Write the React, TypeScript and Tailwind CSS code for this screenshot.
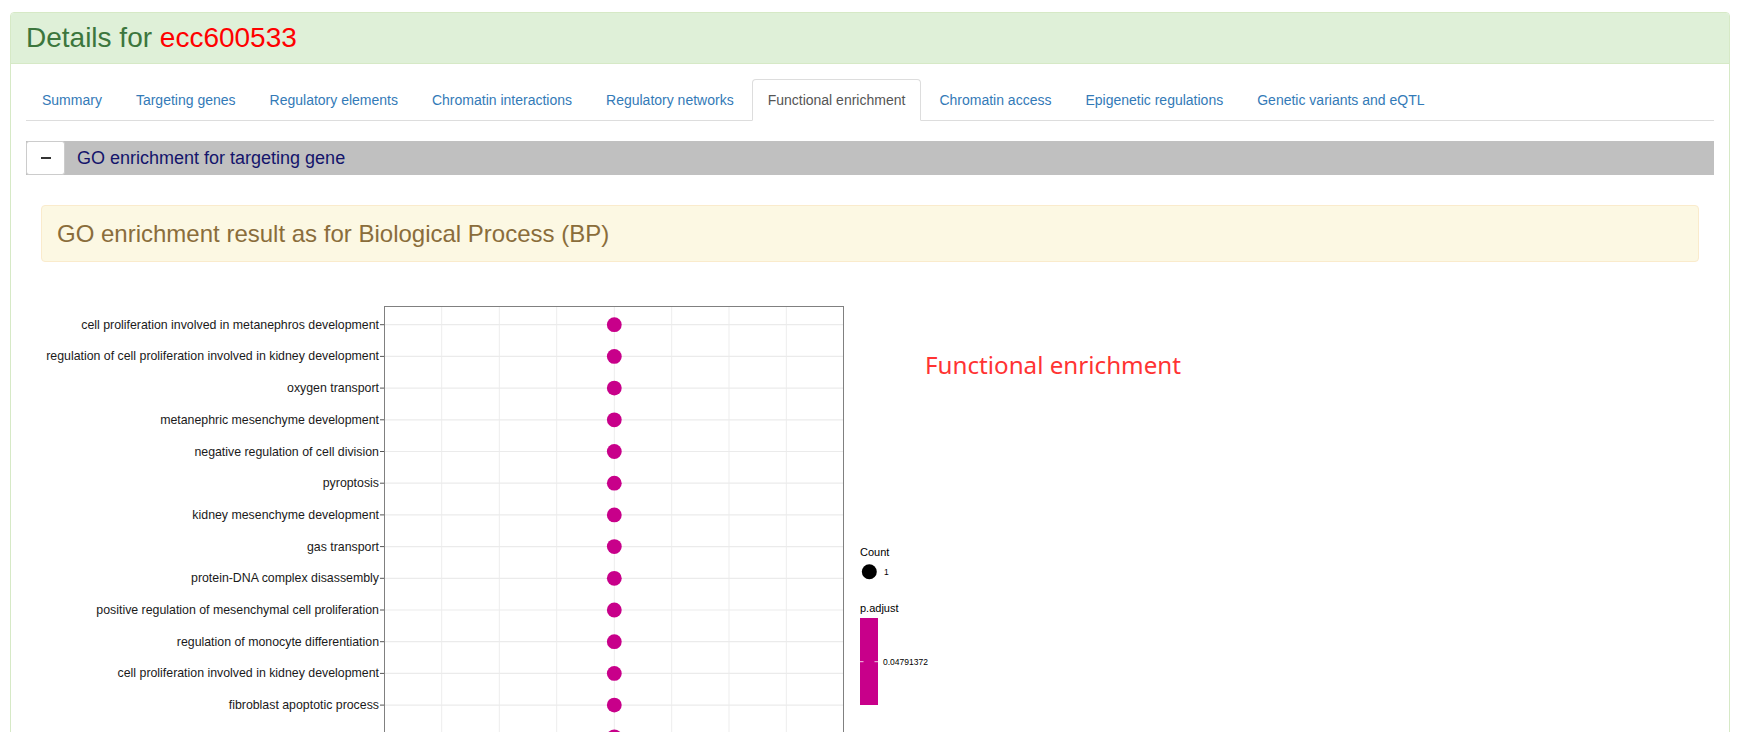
import React from "react";

const ROWS: string[] = [
  "cell proliferation involved in metanephros development",
  "regulation of cell proliferation involved in kidney development",
  "oxygen transport",
  "metanephric mesenchyme development",
  "negative regulation of cell division",
  "pyroptosis",
  "kidney mesenchyme development",
  "gas transport",
  "protein-DNA complex disassembly",
  "positive regulation of mesenchymal cell proliferation",
  "regulation of monocyte differentiation",
  "cell proliferation involved in kidney development",
  "fibroblast apoptotic process",
  "",
];

const TABS = [
  "Summary",
  "Targeting genes",
  "Regulatory elements",
  "Chromatin interactions",
  "Regulatory networks",
  "Functional enrichment",
  "Chromatin access",
  "Epigenetic regulations",
  "Genetic variants and eQTL",
];

const DOT = "#c8008a";

function DotPlot() {
  const px0 = 343.5;
  const py0 = 24.5;
  const pw = 459;
  const ph = 480;
  const rowY = (i: number) => 42.7 + i * 31.7;
  const vx = [400.7, 458.3, 515.7, 573.3, 630.7, 688, 745.3];
  return (
    <svg width="870" height="510" viewBox="0 0 870 510" className="block shrink-0 overflow-visible">
      <rect x={px0} y={py0} width={pw} height={ph} fill="#ffffff" />
      {vx.map((x, i) => (
        <line key={"v" + i} x1={x} y1={py0} x2={x} y2={py0 + ph} stroke="#ededed" strokeWidth={1} />
      ))}
      {ROWS.map((_, i) => (
        <line key={"h" + i} x1={px0} y1={rowY(i)} x2={px0 + pw} y2={rowY(i)} stroke="#ebebeb" strokeWidth={1.2} />
      ))}
      {ROWS.map((_, i) => (
        <circle key={"c" + i} cx={573.3} cy={rowY(i)} r={7.4} fill={DOT} />
      ))}
      <rect x={px0} y={py0} width={pw} height={ph} fill="none" stroke="#808080" strokeWidth={1} />
      {ROWS.map((label, i) => (
        <g key={"l" + i}>
          <line x1={339} y1={rowY(i)} x2={343} y2={rowY(i)} stroke="#555" strokeWidth={1} />
          {label && (
            <text
              x={338}
              y={rowY(i)}
              textAnchor="end"
              dominantBaseline="central"
              fontFamily="Liberation Sans, Arial, sans-serif"
              fontSize="12.35"
              fill="#1a1a1a"
            >
              {label}
            </text>
          )}
        </g>
      ))}
      {/* legend */}
      <text x={819} y={270} dominantBaseline="central" fontFamily="Liberation Sans, Arial, sans-serif" fontSize="11" fill="#000">
        Count
      </text>
      <circle cx={828.3} cy={289.7} r={7.5} fill="#000" />
      <text x={843} y={290} dominantBaseline="central" fontFamily="Liberation Sans, Arial, sans-serif" fontSize="8.5" fill="#000">
        1
      </text>
      <text x={819} y={326} dominantBaseline="central" fontFamily="Liberation Sans, Arial, sans-serif" fontSize="11" fill="#000">
        p.adjust
      </text>
      <rect x={819} y={336} width={18} height={87} fill={DOT} />
      <line x1={819} y1={379.7} x2={822.5} y2={379.7} stroke="#ffffff" strokeWidth={0.8} />
      <line x1={833.5} y1={379.7} x2={837} y2={379.7} stroke="#ffffff" strokeWidth={0.8} />
      <text x={842} y={380} dominantBaseline="central" fontFamily="Liberation Sans, Arial, sans-serif" fontSize="8.5" fill="#000">
        0.04791372
      </text>
    </svg>
  );
}

export default function App() {
  return (
    <div className="min-h-screen bg-white pt-[12px] font-['Liberation_Sans',Arial,sans-serif] text-[14px] text-[#333]">
      <div className="ml-[10px] w-[1720px] rounded-[4px] border border-[#d6e9c6] bg-white">
        <div className="rounded-t-[3px] border-b border-[#d6e9c6] bg-[#dff0d8] px-[15px] py-[10px]">
          <h3 className="text-[28px] leading-[30px] text-[#3c763d]">
            Details for <span className="text-[#ff0000]">ecc600533</span>
          </h3>
        </div>
        <div className="p-[15px]">
          <ul className="flex border-b border-[#dddddd]">
            {TABS.map((t) => {
              const active = t === "Functional enrichment";
              return (
                <li key={t} className="-mb-px mr-[2px]">
                  <a
                    className={
                      active
                        ? "block rounded-t-[4px] border border-[#dddddd] border-b-transparent bg-white px-[15px] py-[10px] leading-[20px] text-[#555555]"
                        : "block rounded-t-[4px] border border-transparent px-[15px] py-[10px] leading-[20px] text-[#337ab7]"
                    }
                  >
                    {t}
                  </a>
                </li>
              );
            })}
          </ul>

          <div className="mt-[20px] flex h-[34px] items-center bg-[#c0c0c0]">
            <div className="flex h-[34px] w-[39px] items-center justify-center rounded-[3px] border border-[#cccccc] bg-white">
              <span className="block h-[2px] w-[10px] bg-[#333333]" />
            </div>
            <span className="ml-[12px] text-[18px] leading-[20px] text-[#14146b]">GO enrichment for targeting gene</span>
          </div>

          <div className="mx-[15px] mt-[30px] rounded-[4px] border border-[#faebcc] bg-[#fcf8e3] p-[15px]">
            <h3 className="text-[24px] leading-[25px] text-[#8a6d3b]">GO enrichment result as for Biological Process (BP)</h3>
          </div>

          <div className="mx-[15px] mt-[20px] flex items-start">
            <DotPlot />
            <div className="ml-[14px] mt-[67px] font-['Noto_Sans',sans-serif] text-[24.2px] leading-[32px] text-[#ff3333]">
              Functional enrichment
            </div>
          </div>
        </div>
      </div>
    </div>
  );
}
